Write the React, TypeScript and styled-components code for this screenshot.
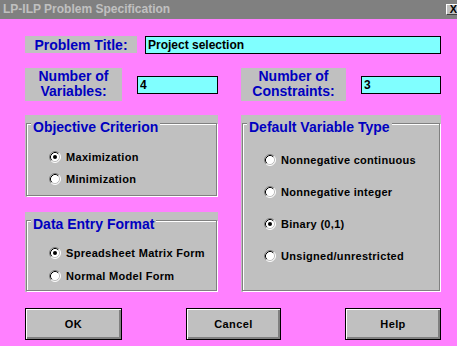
import React from 'react';
import styled, { createGlobalStyle } from 'styled-components';

const GlobalStyles = createGlobalStyle`
  html, body {
    margin: 0;
    padding: 0;
    background: #ff80ff;
    overflow: hidden;
  }
  * {
    box-sizing: border-box;
  }
`;

const Window = styled.div`
  width: 457px;
  height: 346px;
  display: flex;
  flex-direction: column;
  background: #ff80ff;
  font-family: "Liberation Sans", Arial, sans-serif;
  overflow: hidden;
`;

const TitleBar = styled.div`
  height: 19px;
  display: flex;
  align-items: flex-start;
  justify-content: space-between;
  background: #808080;
  overflow: hidden;
`;

const TitleText = styled.span`
  padding-left: 3px;
  line-height: 19px;
  font-size: 12px;
  font-weight: bold;
  color: #c0c0c0;
`;

const CloseButton = styled.div`
  width: 14px;
  height: 11px;
  margin-top: 4px;
  margin-right: -3px;
  display: flex;
  align-items: center;
  justify-content: center;
  background: #c0c0c0;
  border-top: 1px solid #fff;
  border-left: 1px solid #fff;
  border-bottom: 1px solid #404040;
  font-size: 11px;
  font-weight: bold;
  line-height: 1;
  color: #000;
`;

const Body = styled.div`
  flex: 1;
  display: flex;
  flex-direction: column;
  padding: 17px 16px 0 25px;
`;

const TitleRow = styled.div`
  display: flex;
  align-items: flex-start;
  gap: 8px;
`;

const Columns = styled.div<{ $top: number }>`
  display: grid;
  grid-template-columns: 193px 200px;
  column-gap: 23px;
  margin-top: ${(p) => p.$top}px;
`;

const Field = styled.div`
  display: flex;
  align-items: center;
  gap: 15px;
`;

const Label = styled.div<{ $width: number; $height: number }>`
  width: ${(p) => p.$width}px;
  height: ${(p) => p.$height}px;
  padding-top: 1px;
  background: #c0c0c0;
  color: #0000c0;
  font-size: 14px;
  font-weight: bold;
  line-height: ${(p) => (p.$height > 20 ? 15 : 16)}px;
  text-align: center;
`;

const TextBox = styled.input<{ $width?: number }>`
  ${(p) => (p.$width ? `width: ${p.$width}px;` : 'flex: 1;')}
  height: 18px;
  margin: 0;
  padding: 0 2px;
  border: 1px solid #000;
  border-radius: 0;
  outline: none;
  background: #80ffff;
  color: #000;
  font-family: "Liberation Sans", Arial, sans-serif;
  font-size: 12px;
  font-weight: bold;
`;

const Stack = styled.div`
  display: flex;
  flex-direction: column;
  gap: 15px;
`;

const Panel = styled.div<{ $height?: number }>`
  display: flex;
  flex-direction: column;
  ${(p) => (p.$height ? `height: ${p.$height}px;` : '')}
  padding: 8px 1px 1px 1px;
  background: #c0c0c0;
`;

const Frame = styled.div`
  flex: 1;
  border: 1px solid #808080;
  box-shadow: inset 1px 1px 0 #fff, 1px 1px 0 #fff;
`;

const GroupTitle = styled.div`
  width: fit-content;
  margin: -5px 0 0 4px;
  padding: 0 2px;
  height: 16px;
  background: #c0c0c0;
  color: #0000c0;
  font-size: 14px;
  font-weight: bold;
  line-height: 16px;
  position: relative;
`;

const OptionList = styled.div<{ $top: number; $gap: number; $indent: number }>`
  display: flex;
  flex-direction: column;
  gap: ${(p) => p.$gap}px;
  margin-top: ${(p) => p.$top}px;
  padding-left: ${(p) => p.$indent}px;
`;

const Option = styled.div`
  display: flex;
  align-items: center;
  gap: 5px;
  height: 16px;
  font-size: 11px;
  font-weight: bold;
  letter-spacing: 0.3px;
  color: #000;
`;

const ButtonRow = styled.div`
  display: flex;
  justify-content: space-between;
  margin-top: 16px;
`;

const Button = styled.div<{ $width: number }>`
  width: ${(p) => p.$width}px;
  height: 32px;
  display: flex;
  align-items: center;
  justify-content: center;
  background: #c0c0c0;
  border: 1px solid #000;
  box-shadow: inset 1px 1px 0 #fff, inset -2px -2px 0 #808080;
  font-size: 11px;
  font-weight: bold;
  letter-spacing: 0.4px;
  color: #000;
`;

function Radio({ checked }: { checked?: boolean }) {
  return (
    <svg width="12" height="12" viewBox="0 0 12 12">
      <circle cx="6" cy="6" r="5" fill="#fff" />
      <path d="M2.11 9.89 A5.5 5.5 0 0 1 9.89 2.11" fill="none" stroke="#808080" strokeWidth="1" />
      <path d="M9.89 2.11 A5.5 5.5 0 0 1 2.11 9.89" fill="none" stroke="#fff" strokeWidth="1" />
      <path d="M2.82 9.18 A4.5 4.5 0 0 1 9.18 2.82" fill="none" stroke="#000" strokeWidth="1" />
      <path d="M9.18 2.82 A4.5 4.5 0 0 1 2.82 9.18" fill="none" stroke="#c0c0c0" strokeWidth="1" />
      {checked && <circle cx="6" cy="6" r="2" fill="#000" />}
    </svg>
  );
}

type GroupProps = {
  title: string;
  options: string[];
  selected: number;
  height?: number;
  top: number;
  gap: number;
  indent: number;
};

function Group({ title, options, selected, height, top, gap, indent }: GroupProps) {
  return (
    <Panel $height={height}>
      <Frame>
        <GroupTitle>{title}</GroupTitle>
        <OptionList $top={top} $gap={gap} $indent={indent}>
          {options.map((o, i) => (
            <Option key={o}>
              <Radio checked={i === selected} />
              {o}
            </Option>
          ))}
        </OptionList>
      </Frame>
    </Panel>
  );
}

export default function App() {
  return (
    <>
      <GlobalStyles />
      <Window>
        <TitleBar>
          <TitleText>LP-ILP Problem Specification</TitleText>
          <CloseButton>X</CloseButton>
        </TitleBar>
        <Body>
          <TitleRow>
            <Label $width={112} $height={17}>Problem Title:</Label>
            <TextBox readOnly defaultValue="Project selection" />
          </TitleRow>

          <Columns $top={14}>
            <Field>
              <Label $width={97} $height={33}>
                Number of
                <br />
                Variables:
              </Label>
              <TextBox readOnly defaultValue="4" $width={81} />
            </Field>
            <Field>
              <Label $width={105} $height={33}>
                Number of
                <br />
                Constraints:
              </Label>
              <TextBox readOnly defaultValue="3" $width={80} />
            </Field>
          </Columns>

          <Columns $top={14}>
            <Stack>
              <Group
                title="Objective Criterion"
                options={['Maximization', 'Minimization']}
                selected={0}
                height={82}
                top={14}
                gap={6}
                indent={22}
              />
              <Group
                title="Data Entry Format"
                options={['Spreadsheet Matrix Form', 'Normal Model Form']}
                selected={0}
                height={80}
                top={13}
                gap={7}
                indent={22}
              />
            </Stack>
            <Group
              title="Default Variable Type"
              options={[
                'Nonnegative continuous',
                'Nonnegative integer',
                'Binary (0,1)',
                'Unsigned/unrestricted',
              ]}
              selected={2}
              top={17}
              gap={16}
              indent={21}
            />
          </Columns>

          <ButtonRow>
            <Button $width={97}>OK</Button>
            <Button $width={95}>Cancel</Button>
            <Button $width={96}>Help</Button>
          </ButtonRow>
        </Body>
      </Window>
    </>
  );
}
